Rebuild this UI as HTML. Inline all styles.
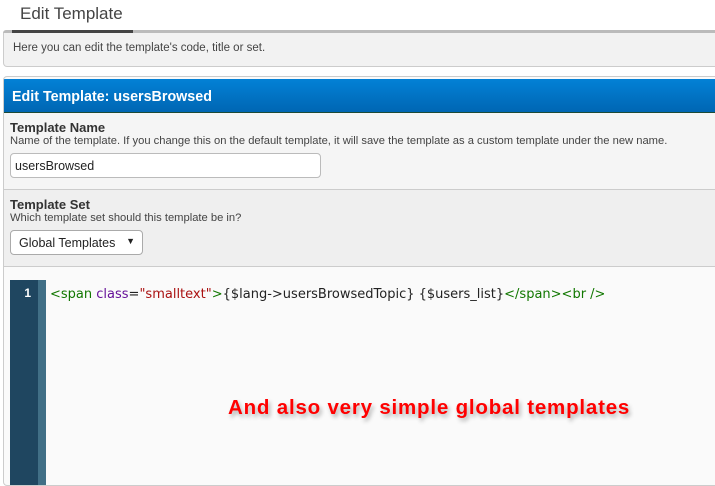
<!DOCTYPE html>
<html><head><meta charset="utf-8"><style>
*{box-sizing:border-box;margin:0;padding:0}
body{width:715px;height:477px;overflow:hidden;background:#fff;font-family:"Liberation Sans",sans-serif;position:relative;color:#333}
.abs{position:absolute}
.tab{left:20px;top:4px;font-size:17px;color:#444}
.tabline{left:3px;top:30px;width:712px;height:3px;background:#bbb;border-radius:3px 0 0 0}
.tabdark{left:12px;top:30px;width:121px;height:3px;background:#444}
.desc{left:3px;top:33px;width:720px;height:34px;background:#f2f2f2;border:1px solid #ccc;border-top:none;border-radius:0 0 4px 4px;font-size:11.5px;color:#444;padding:9px 9px}
.panel{left:3px;top:76px;width:720px;height:410px;border:1px solid #ccc;border-radius:4px;background:#fafafa;overflow:hidden}
.hdr{left:0;top:2px;width:100%;height:34px;background:linear-gradient(#0381d6,#0066b3);border-bottom:1px solid #1d4a35;color:#fff;font-weight:bold;font-size:14.3px;padding:10px 8px}
.row1{left:0;top:36px;width:100%;height:77px;background:#f5f5f5;border-bottom:1px solid #ccc}
.row2{left:0;top:113px;width:100%;height:77px;background:#efefef;border-bottom:1px solid #ccc}
.lbl{font-weight:bold;font-size:13px;color:#333}
.sm{font-size:11.2px;color:#444}
.inp{left:6px;top:40px;width:311px;height:25px;background:#fff;border:1px solid #bbb;border-radius:4px;font-size:12.5px;padding:5px 4px;color:#222}
.sel{left:6px;top:40px;width:133px;height:25px;background:#fff;border:1px solid #aaa;border-radius:4px;font-size:12.5px;padding:5px 8px;color:#222}
.gut{left:6px;top:203px;width:28px;height:230px;background:#1f4660;color:#fff;font-weight:bold;font-size:12px;text-align:right;padding:6px 7px 0 0}
.gut2{left:34px;top:203px;width:8px;height:230px;background:#416f86}
.code{left:46px;top:210px;font-family:"DejaVu Sans",sans-serif;font-size:13px;color:#222;white-space:pre}
.g{color:#170}.p{color:#619}.r{color:#a11}
.big{left:228px;top:396px;font-size:20.5px;font-weight:bold;color:#f00;text-shadow:2px 3px 4px rgba(0,0,0,.3);letter-spacing:.8px}
</style></head><body>
<div class="abs tab">Edit Template</div>
<div class="abs tabline"></div><div class="abs tabdark"></div>
<div class="abs desc">Here you can edit the template's code, title or set.</div>
<div class="abs panel">
 <div class="abs hdr">Edit Template: usersBrowsed</div>
 <div class="abs row1"><div style="padding:7px 6px 0"><div class="lbl">Template Name</div><div class="sm">Name of the template. If you change this on the default template, it will save the template as a custom template under the new name.</div></div><div class="abs inp">usersBrowsed</div></div>
 <div class="abs row2"><div style="padding:7px 6px 0"><div class="lbl">Template Set</div><div class="sm">Which template set should this template be in?</div></div><div class="abs sel">Global Templates<span style="position:absolute;right:7px;top:5px;font-size:9px">&#9660;</span></div></div>
 <div class="abs gut">1</div><div class="abs gut2"></div>
 <div class="abs code"><span class="g">&lt;span</span> <span class="p">class</span>=<span class="r">"smalltext"</span><span class="g">&gt;</span>{$lang-&gt;usersBrowsedTopic} {$users_list}<span class="g">&lt;/span&gt;&lt;br /&gt;</span></div>
</div>
<div class="abs big">And also very simple global templates</div>
</body></html>
